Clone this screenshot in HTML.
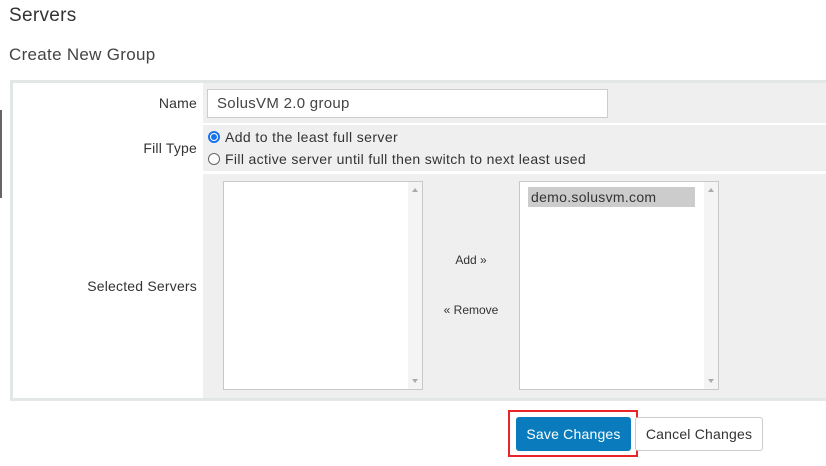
<!DOCTYPE html>
<html><head><meta charset="utf-8"><style>
body{margin:0;width:826px;height:466px;background:#fff;font-family:"Liberation Sans",sans-serif;color:#333;position:relative;overflow:hidden}
.a{position:absolute}
.lbl{font-size:14px;color:#333;text-align:right;width:187px;left:10px;letter-spacing:0.2px}
.list{background:#fff;border:1px solid #c8c8c8;box-sizing:border-box}
.sb{position:absolute;right:0;top:0;bottom:0;width:14px;background:#f4f4f4}
.up,.dn{position:absolute;left:4px;width:0;height:0;border-left:3px solid transparent;border-right:3px solid transparent}
.up{top:6px;border-bottom:4px solid #aaa}
.dn{bottom:6px;border-top:4px solid #aaa}
.radio{position:absolute;width:12px;height:12px;border:1px solid #666;border-radius:50%;background:#fff;box-sizing:border-box}
</style></head><body>
<div class="a" style="left:9px;top:5px;font-size:19px;color:#333;letter-spacing:0.3px">Servers</div>
<div class="a" style="left:9px;top:45px;font-size:17px;color:#444;letter-spacing:0.3px">Create New Group</div>
<div class="a" style="left:0;top:110px;width:2px;height:88px;background:#666"></div>
<div class="a" style="left:10px;top:80px;width:830px;height:321px;border:3px solid #e3e8e7;box-sizing:border-box;background:#fff"></div>
<div class="a" style="left:203px;top:83px;width:630px;height:40px;background:#efefef"></div>
<div class="a" style="left:203px;top:125px;width:630px;height:46px;background:#efefef"></div>
<div class="a" style="left:203px;top:174px;width:630px;height:224px;background:#efefef"></div>
<div class="a lbl" style="top:95px">Name</div>
<div class="a lbl" style="top:140px">Fill Type</div>
<div class="a lbl" style="top:278px">Selected Servers</div>
<div class="a" style="left:207px;top:89px;width:401px;height:29px;background:#fff;border:1px solid #ccc;box-sizing:border-box;font-size:15px;padding:5px 0 0 9px;color:#444;letter-spacing:0.3px">SolusVM 2.0 group</div>
<div class="radio" style="left:208px;top:131px;border:2px solid #1a73e8"><div style="position:absolute;left:1px;top:1px;width:6px;height:6px;border-radius:50%;background:#1a73e8"></div></div>
<div class="a" style="left:225px;top:129px;font-size:14px;letter-spacing:0.4px">Add to the least full server</div>
<div class="radio" style="left:208px;top:153px"></div>
<div class="a" style="left:225px;top:151px;font-size:14px;letter-spacing:0.35px">Fill active server until full then switch to next least used</div>
<div class="a list" style="left:223px;top:181px;width:200px;height:209px"><div class="sb"><div class="up"></div><div class="dn"></div></div></div>
<div class="a list" style="left:519px;top:181px;width:200px;height:209px"><div class="sb"><div class="up"></div><div class="dn"></div></div>
<div class="a" style="left:8px;top:5px;width:167px;height:20px;background:#ccc;font-size:14px;line-height:20px;padding-left:3px;box-sizing:border-box;color:#333;letter-spacing:0.3px">demo.solusvm.com</div></div>
<div class="a" style="left:421px;top:253px;width:100px;text-align:center;font-size:12px">Add »</div>
<div class="a" style="left:421px;top:303px;width:100px;text-align:center;font-size:12px">« Remove</div>
<div class="a" style="left:508px;top:410px;width:130px;height:47px;border:2px solid #e8262a;box-sizing:border-box"></div>
<div class="a" style="left:516px;top:417px;width:115px;height:34px;background:#0a7cbd;border-radius:3px;color:#fff;font-size:14px;text-align:center;line-height:34px;letter-spacing:0.2px">Save Changes</div>
<div class="a" style="left:635px;top:417px;width:128px;height:34px;background:#fff;border:1px solid #ccc;border-radius:3px;box-sizing:border-box;color:#333;font-size:14px;text-align:center;line-height:32px;letter-spacing:0.2px">Cancel Changes</div>
</body></html>
